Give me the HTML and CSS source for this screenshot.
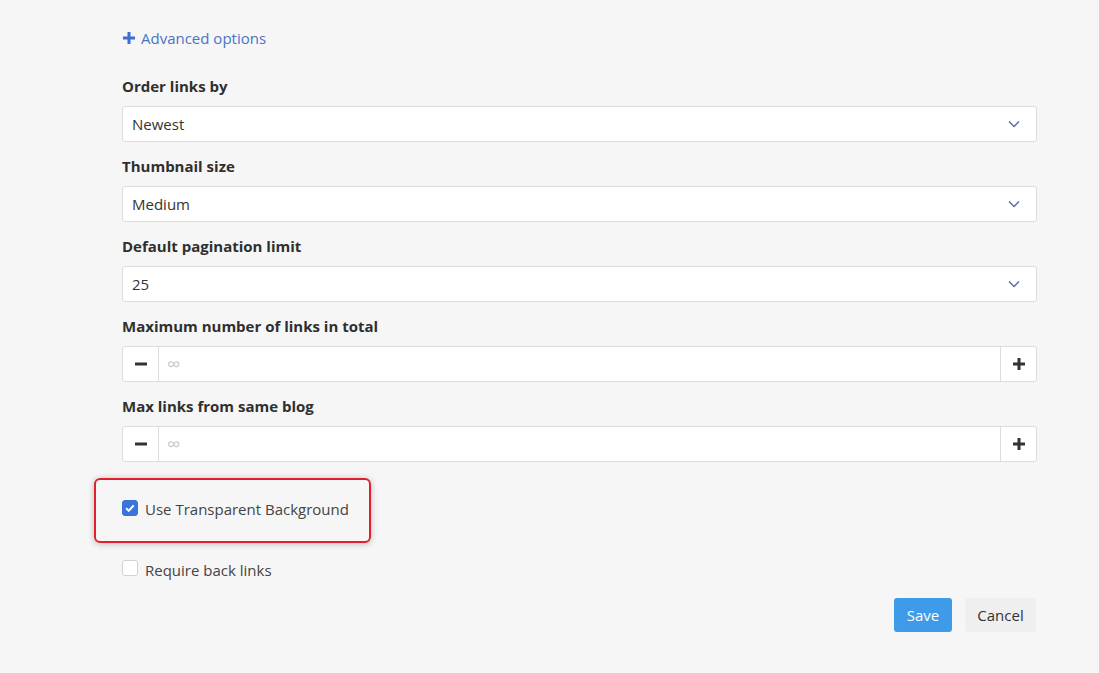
FILE: index.html
```html
<!DOCTYPE html>
<html>
<head>
<meta charset="utf-8">
<link rel="stylesheet" href="styles.css">
</head>
<body>
<div class="form">
  <a class="adv" href="#"><svg class="adv-icon" viewBox="0 0 14 14" width="14" height="14"><path d="M7 1v12M1 7h12" stroke="#3b6fd1" stroke-width="3"/></svg>Advanced options</a>

  <div class="field">
    <div class="label">Order links by</div>
    <div class="select"><span>Newest</span><svg class="chev" viewBox="0 0 12 8" width="12" height="8"><path d="M1 1.5l5 5 5-5" fill="none" stroke="#5a6a9c" stroke-width="1.4"/></svg></div>
  </div>
  <div class="field">
    <div class="label">Thumbnail size</div>
    <div class="select"><span>Medium</span><svg class="chev" viewBox="0 0 12 8" width="12" height="8"><path d="M1 1.5l5 5 5-5" fill="none" stroke="#5a6a9c" stroke-width="1.4"/></svg></div>
  </div>
  <div class="field">
    <div class="label">Default pagination limit</div>
    <div class="select"><span>25</span><svg class="chev" viewBox="0 0 12 8" width="12" height="8"><path d="M1 1.5l5 5 5-5" fill="none" stroke="#5a6a9c" stroke-width="1.4"/></svg></div>
  </div>
  <div class="field">
    <div class="label">Maximum number of links in total</div>
    <div class="numgroup">
      <div class="nbtn"><svg viewBox="0 0 14 14" width="14" height="14"><path d="M1 7h12" stroke="#333" stroke-width="3"/></svg></div>
      <div class="ninput">∞</div>
      <div class="nbtn"><svg viewBox="0 0 14 14" width="14" height="14"><path d="M7 1v12M1 7h12" stroke="#333" stroke-width="3"/></svg></div>
    </div>
  </div>
  <div class="field">
    <div class="label">Max links from same blog</div>
    <div class="numgroup">
      <div class="nbtn"><svg viewBox="0 0 14 14" width="14" height="14"><path d="M1 7h12" stroke="#333" stroke-width="3"/></svg></div>
      <div class="ninput">∞</div>
      <div class="nbtn"><svg viewBox="0 0 14 14" width="14" height="14"><path d="M7 1v12M1 7h12" stroke="#333" stroke-width="3"/></svg></div>
    </div>
  </div>

  <div class="check-row first">
    <div class="highlight"></div>
    <span class="box checked"><svg viewBox="0 0 16 16" width="16" height="16"><path d="M4.2 8.3l2.5 2.6 5-5.6" fill="none" stroke="#fff" stroke-width="2"/></svg></span>
    <span class="check-text">Use Transparent Background</span>
  </div>
  <div class="check-row second">
    <span class="box"></span>
    <span class="check-text">Require back links</span>
  </div>

  <div class="actions">
    <button class="btn save">Save</button>
    <button class="btn cancel">Cancel</button>
  </div>
</div>
</body>
</html>
```
FILE: styles.css
```css
html, body {
  margin: 0;
  padding: 0;
  background: #f6f6f6;
  font-family: "Open Sans", "Noto Sans", sans-serif;
  font-size: 15px;
  color: #333;
}
.form {
  width: 915px;
  padding: 28px 0 0 122px;
}
.adv {
  display: flex;
  align-items: center;
  height: 20px;
  color: #4a74c4;
  text-decoration: none;
  font-size: 15px;
}
.adv-icon {
  margin-right: 5px;
}
.field {
  margin-top: 29px;
}
.field + .field {
  margin-top: 15px;
}
.label {
  height: 20px;
  line-height: 18px;
  font-weight: 700;
  font-size: 15px;
  color: #2f2f2f;
  margin-bottom: 9px;
}
.select {
  height: 34px;
  border: 1px solid #dcdcdc;
  border-radius: 3px;
  background: #fff;
  display: flex;
  align-items: center;
  justify-content: space-between;
  padding: 0 16px 0 9px;
  color: #333;
}
.numgroup {
  height: 34px;
  border: 1px solid #dcdcdc;
  border-radius: 3px;
  background: #fff;
  display: flex;
}
.nbtn {
  width: 35px;
  display: flex;
  align-items: center;
  justify-content: center;
}
.nbtn:first-child {
  border-right: 1px solid #dcdcdc;
}
.nbtn:last-child {
  border-left: 1px solid #dcdcdc;
}
.ninput {
  flex: 1;
  display: flex;
  align-items: center;
  padding-left: 8px;
  color: #c8c8c8;
  font-size: 19px;
}
.check-row {
  position: relative;
  display: flex;
  align-items: center;
  height: 20px;
}
.check-row.first {
  margin-top: 36px;
}
.check-row.second {
  margin-top: 40px;
}
.check-row.second .check-text {
  margin-top: 3px;
}
.box {
  width: 16px;
  height: 16px;
  box-sizing: border-box;
  border: 1px solid #d2d2d2;
  border-radius: 3px;
  background: #fff;
  margin-right: 7px;
  display: flex;
}
.box.checked {
  background: #3b74d8;
  border-color: #3b74d8;
}
.box.checked svg {
  margin: -1px;
}
.check-text {
  color: #444;
  font-size: 15px;
  margin-top: 2px;
}
.highlight {
  position: absolute;
  left: -28px;
  top: -20px;
  width: 277px;
  height: 65px;
  box-sizing: border-box;
  border: 2px solid #e0212b;
  border-radius: 6px;
  box-shadow: 0 1px 6px rgba(0,0,0,0.25);
  pointer-events: none;
}
.actions {
  display: flex;
  justify-content: flex-end;
  gap: 13px;
  margin-top: 20px;
  padding-right: 1px;
}
.btn {
  height: 34px;
  border: none;
  border-radius: 3px;
  font-family: inherit;
  font-size: 15px;
  padding: 0;
}
.save {
  width: 58px;
  background: #3d9be9;
  color: #fff;
}
.cancel {
  width: 71px;
  background: #efefef;
  color: #333;
}
```
